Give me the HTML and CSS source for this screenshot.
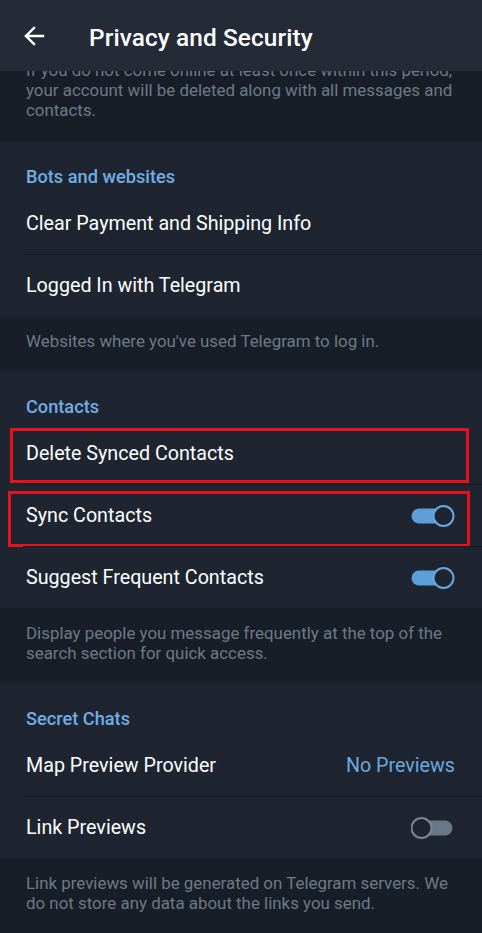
FILE: index.html
```html
<!DOCTYPE html>
<html lang="en">
<head>
  <meta charset="UTF-8">
  <title>Privacy and Security</title>
  <meta name="viewport" content="width=device-width, initial-scale=1.0">
  <link rel="stylesheet" href="styles.css">
</head>
<body>
  <header class="topbar">
    <button class="back" aria-label="Back">
      <svg width="22" height="22" viewBox="0 0 22 22"><path d="M20 11H3M11 3l-8 8 8 8" fill="none" stroke="#fff" stroke-width="2.4" stroke-linecap="square"/></svg>
    </button>
    <h1>Privacy and Security</h1>
  </header>

  <main class="list">
    <p class="hint hint-top">If you do not come online at least once within this period, your account will be deleted along with all messages and contacts.</p>

    <section class="group">
      <h2>Bots and websites</h2>
      <div class="row">Clear Payment and Shipping Info</div>
      <div class="row">Logged In with Telegram</div>
    </section>
    <p class="hint">Websites where you've used Telegram to log in.</p>

    <section class="group">
      <h2>Contacts</h2>
      <div class="row">Delete Synced Contacts<span class="mark mark-one"></span></div>
      <div class="row">Sync Contacts
        <svg class="switch" width="44" height="24" viewBox="0 0 44 24"><rect x="0.5" y="4.5" width="34" height="15" rx="7.5" fill="#5b9ed8"/><circle cx="32.5" cy="12" r="10" fill="#1e2531" stroke="#67a8e3" stroke-width="2"/></svg>
        <span class="mark mark-two"></span>
      </div>
      <div class="row">Suggest Frequent Contacts
        <svg class="switch" width="44" height="24" viewBox="0 0 44 24"><rect x="0.5" y="4.5" width="34" height="15" rx="7.5" fill="#5b9ed8"/><circle cx="32.5" cy="12" r="10" fill="#1e2531" stroke="#67a8e3" stroke-width="2"/></svg>
      </div>
    </section>
    <p class="hint">Display people you message frequently at the top of the search section for quick access.</p>

    <section class="group">
      <h2>Secret Chats</h2>
      <div class="row">Map Preview Provider<span class="value">No Previews</span></div>
      <div class="row">Link Previews
        <svg class="switch" width="44" height="24" viewBox="0 0 44 24"><rect x="7.5" y="4.5" width="34" height="15" rx="7.5" fill="#6a7785"/><circle cx="10.5" cy="12" r="10" fill="#1e2531" stroke="#7b8693" stroke-width="2"/></svg>
      </div>
    </section>
    <p class="hint">Link previews will be generated on Telegram servers. We do not store any data about the links you send.</p>
  </main>
</body>
</html>
```

FILE: styles.css
```css
*{box-sizing:border-box;margin:0;padding:0;}
body{
  font-family:Roboto,"Noto Sans",Arial,sans-serif;
  background:#181e27;
  color:#fff;
  width:482px;
  height:933px;
  overflow:hidden;
}
.topbar{
  position:fixed;
  top:0;left:0;right:0;
  height:71px;
  display:flex;
  align-items:center;
  background:#242a36;
  z-index:2;
}
.back{
  width:89px;
  height:71px;
  padding-left:23px;
  display:flex;
  align-items:center;
  border:none;
  background:none;
}
.topbar h1{
  font-size:24.4px;
  font-weight:500;
  letter-spacing:.1px;
  color:#fff;
  margin-top:3px;
}
.hint{
  background:#181e27;
  color:#6e7986;
  font-size:16.9px;
  line-height:20px;
  padding:15px 26px 21px;
}
.hint-top{padding-top:60px;padding-bottom:22px;}
.group{background:#1e2531;}
.group h2{
  font-size:18.2px;
  font-weight:500;
  color:#71aee6;
  line-height:22px;
  padding:24px 26px 4px;
}
.row{
  position:relative;
  height:62px;
  display:flex;
  align-items:center;
  justify-content:space-between;
  padding:0 27px 0 26px;
  font-size:19.7px;
  color:#fff;
}
.row + .row{
  border-top:1px solid #151b23;
  margin-left:23px;
  padding-left:3px;
}
.value{color:#6aa8df;}
.switch{display:block;}
.mark{
  position:absolute;
  border:3px solid #e8101b;
  pointer-events:none;
}
.mark-one{left:10px;right:13px;top:6px;bottom:1px;}
.mark-two{left:-15px;right:12px;top:6px;bottom:-1px;}
```
